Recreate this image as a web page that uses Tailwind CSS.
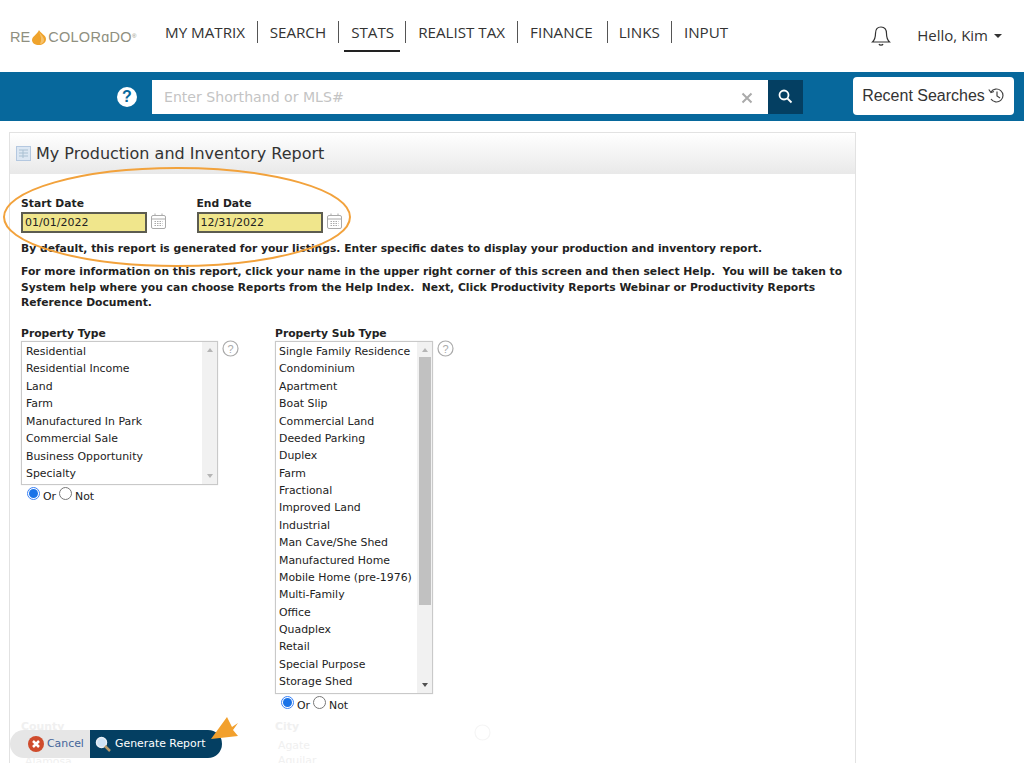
<!DOCTYPE html>
<html lang="en">
<head>
    <meta charset="UTF-8">
    <title>My Production and Inventory Report</title>
    <script src="https://cdn.jsdelivr.net/npm/@tailwindcss/browser@4"></script>
</head>
<body class="relative h-[763px] w-[1024px] overflow-hidden bg-white font-['DejaVu_Sans',sans-serif] text-[#222]">

    <!-- Top nav -->
    <header class="flex h-[72px] items-start">
        <div class="flex w-[165px] items-center pl-[10px] pt-[28px] font-['Liberation_Sans',sans-serif] text-[14.500px] leading-[18px] text-[#8f8f80]">
            <span>RE</span>
            <svg width="16" height="17" viewBox="0 0 16 17" class="mx-[1px]"><path d="M8 1 C9 4 15 6 15 10 C15 14 11 16 8 16 C4 16 1 14 1 11 C1 7 6 6 8 1Z" fill="#efa32c"/><path d="M8 3 C10 6 13 8 13 11 C13 13 11 15 9 15 C11 11 10 7 8 3Z" fill="#f6c26b"/></svg>
            <span class="tracking-[0.300px]">COLORɑDO</span><span class="mt-[5px] self-start text-[6px] leading-[6px]">®</span>
        </div>
        <nav class="flex pt-[21px] font-['Open_Sans',sans-serif] text-[15.200px] leading-[22px] text-[#333]">
            <a class="h-[22px] border-r border-[#555] pr-[12px]">MY MATRIX</a>
            <a class="h-[22px] border-r border-[#555] pl-[11.500px] pr-[12px]">SEARCH</a>
            <a class="relative h-[22px] border-r border-[#555] pl-[12px] pr-[11px]">STATS<span class="absolute left-[5px] right-[5px] top-[29px] h-[2px] bg-[#222]"></span></a>
            <a class="h-[22px] border-r border-[#555] px-[12px]">REALIST TAX</a>
            <a class="h-[22px] border-r border-[#555] pl-[12px] pr-[14px]">FINANCE</a>
            <a class="h-[22px] border-r border-[#555] px-[11px]">LINKS</a>
            <a class="h-[22px] pl-[12px]">INPUT</a>
        </nav>
        <div class="ml-auto flex items-center pt-[22px] pr-[22px] font-['Open_Sans',sans-serif] text-[15px] leading-[22px] text-[#333]">
            <svg width="20" height="22" viewBox="0 0 20 22" fill="none" stroke="#333" stroke-width="1.200" class="mr-[26px] mt-[3px]"><path d="M10 2 C6 2 4.500 5 4.500 8.500 C4.500 13 3.500 15 1.500 17 H18.500 C16.500 15 15.500 13 15.500 8.500 C15.500 5 14 2 10 2Z"/><path d="M8 19 C8.500 20.500 11.500 20.500 12 19"/></svg>
            <span>Hello, Kim</span>
            <span class="ml-[6px] mt-[2px] h-0 w-0 border-x-[4px] border-t-[4px] border-x-transparent border-t-[#333]"></span>
        </div>
    </header>

    <!-- Search bar -->
    <div class="flex h-[49px] items-center bg-[#07689c]">
        <div class="ml-[117px] flex h-[20px] w-[20px] items-center justify-center rounded-full bg-white font-['Liberation_Sans',sans-serif] text-[16px] font-bold text-[#07689c]">?</div>
        <div class="ml-[15px] flex h-[34px] w-[616px] items-center bg-white pl-[12px] pr-[15px] pt-[2px] text-[14.100px] text-[#c4c4c4]">
            <span>Enter Shorthand or MLS#</span>
            <svg width="12" height="12" viewBox="0 0 12 12" class="ml-auto" stroke="#aaa" stroke-width="2"><path d="M1.500 1.500 L10.500 10.500 M10.500 1.500 L1.500 10.500"/></svg>
        </div>
        <div class="flex h-[34px] w-[35px] items-center justify-center bg-[#043f62]">
            <svg width="15" height="15" viewBox="0 0 15 15" fill="none" stroke="#fff" stroke-width="1.800"><circle cx="6" cy="6" r="4.500"/><path d="M9.500 9.500 L13.500 13.500"/></svg>
        </div>
        <div class="mb-[1px] ml-[50px] flex h-[38px] w-[161px] items-center justify-center rounded-[4px] bg-white font-['Liberation_Sans',sans-serif] text-[16px] text-[#333]">
            <span>Recent Searches</span>
            <svg width="17" height="17" viewBox="0 0 17 17" fill="none" stroke="#444" stroke-width="1.200" class="mb-[2px] ml-[3px]"><path d="M3 5 A6.500 6.500 0 1 1 3 12"/><path d="M0.800 2.500 L3 5.500 L6 4.500"/><path d="M9 4.500 V9 L12 11"/></svg>
        </div>
    </div>

    <!-- Report panel -->
    <main class="ml-[9px] mt-[11px] h-[631px] w-[847px] overflow-hidden border border-b-0 border-[#e2e2e2]">
        <div class="flex h-[41px] items-center bg-gradient-to-b from-white to-[#e9e9e9] pl-[6px] text-[16px] text-[#333]">
            <svg width="15" height="15" viewBox="0 0 15 15" class="mr-[5px]"><rect x="0.500" y="0.500" width="14" height="14" fill="#dce7f3" stroke="#b4c8e0"/><path d="M3 4 H12 M3 7 H12 M3 10 H12 M7 4 V12" stroke="#a9c0d2"/></svg>
            <h1>My Production and Inventory Report</h1>
        </div>

        <div class="px-[11px] pt-[22px] text-[10.900px] leading-[15.500px] text-[#222]">
            <div class="flex">
                <div class="w-[175.500px]">
                    <label class="block text-[10.750px] font-bold leading-[16px]">Start Date</label>
                    <div class="flex items-center">
                        <div class="flex h-[21px] w-[126px] items-center border-2 border-[#5c5c50] bg-[#f0e68c] pl-[2px] text-[11px]">01/01/2022</div>
                        <svg width="15" height="16" viewBox="0 0 15 16" fill="none" stroke="#aaa" class="ml-[4px] mt-[-3px]"><rect x="0.500" y="2.500" width="14" height="13" rx="1.500"/><path d="M0.500 6 H14.500 M4 0.500 V3 M11 0.500 V3"/><path d="M3.500 8.500 H11.500 M3.500 10.500 H11.500 M3.500 12.500 H11.500" stroke-dasharray="1.500 1"/></svg>
                    </div>
                </div>
                <div>
                    <label class="block text-[10.750px] font-bold leading-[16px]">End Date</label>
                    <div class="flex items-center">
                        <div class="flex h-[21px] w-[126px] items-center border-2 border-[#5c5c50] bg-[#f0e68c] pl-[2px] text-[11px]">12/31/2022</div>
                        <svg width="15" height="16" viewBox="0 0 15 16" fill="none" stroke="#aaa" class="ml-[4px] mt-[-3px]"><rect x="0.500" y="2.500" width="14" height="13" rx="1.500"/><path d="M0.500 6 H14.500 M4 0.500 V3 M11 0.500 V3"/><path d="M3.500 8.500 H11.500 M3.500 10.500 H11.500 M3.500 12.500 H11.500" stroke-dasharray="1.500 1"/></svg>
                    </div>
                </div>
            </div>

            <p class="mt-[8px] text-[10.750px] font-bold">By default, this report is generated for your listings. Enter specific dates to display your production and inventory report.</p>
            <p class="mt-[7.500px] w-[830px] text-[10.750px] font-bold">For more information on this report, click your name in the upper right corner of this screen and then select Help.&nbsp; You will be taken to System help where you can choose Reports from the Help Index.&nbsp; Next, Click Productivity Reports Webinar or Productivity Reports Reference Document.</p>

            <div class="mt-[15px] flex">
                <!-- Property Type -->
                <div class="w-[254px]">
                    <label class="block text-[10.750px] font-bold leading-[15px]">Property Type</label>
                    <div class="flex">
                        <div class="flex h-[144px] w-[197px] border border-[#c9c9c9] shadow-[0_0_1px_#ddd]">
                            <ul class="flex-1 pl-[4px] pt-[1.500px] leading-[17.430px]">
                                <li>Residential</li><li>Residential Income</li><li>Land</li><li>Farm</li><li>Manufactured In Park</li><li>Commercial Sale</li><li>Business Opportunity</li><li>Specialty</li>
                            </ul>
                            <div class="flex w-[15px] flex-col items-center justify-between bg-[#f1f1f1] py-[6px]">
                                <span class="h-0 w-0 border-x-[3px] border-b-[4px] border-x-transparent border-b-[#b5b5b5]"></span>
                                <span class="h-0 w-0 border-x-[3px] border-t-[4px] border-x-transparent border-t-[#b5b5b5]"></span>
                            </div>
                        </div>
                        <svg width="17" height="17" viewBox="0 0 17 17" class="ml-[4px] mt-[-1px]"><circle cx="8.500" cy="8.500" r="7.500" fill="none" stroke="#aaa" stroke-width="1.200"/><text x="8.500" y="12.500" text-anchor="middle" font-size="11" fill="#aaa" font-family="Liberation Sans">?</text></svg>
                    </div>
                    <div class="ml-[6px] mt-[1px] flex items-start">
                        <span class="mr-[3px] mt-[1px] flex h-[13px] w-[13px] items-center justify-center rounded-full border border-[#3b82f6] bg-white"><span class="h-[9px] w-[9px] rounded-full bg-[#1a73e8]"></span></span><span class="mt-[3px]">Or</span>
                        <span class="ml-[3px] mr-[3px] mt-[1px] h-[13px] w-[13px] rounded-full border border-[#777] bg-white"></span><span class="mt-[3px]">Not</span>
                    </div>
                </div>
                <!-- Property Sub Type -->
                <div>
                    <label class="block text-[10.750px] font-bold leading-[15px]">Property Sub Type</label>
                    <div class="flex">
                        <div class="flex h-[353px] w-[158px] border border-[#c9c9c9] shadow-[0_0_1px_#ddd]">
                            <ul class="flex-1 whitespace-nowrap pl-[3px] pt-[1.500px] leading-[17.370px]">
                                <li>Single Family Residence</li><li>Condominium</li><li>Apartment</li><li>Boat Slip</li><li>Commercial Land</li><li>Deeded Parking</li><li>Duplex</li><li>Farm</li><li>Fractional</li><li>Improved Land</li><li>Industrial</li><li>Man Cave/She Shed</li><li>Manufactured Home</li><li>Mobile Home (pre-1976)</li><li>Multi-Family</li><li>Office</li><li>Quadplex</li><li>Retail</li><li>Special Purpose</li><li>Storage Shed</li>
                            </ul>
                            <div class="flex w-[15px] flex-col items-center bg-[#f1f1f1]">
                                <span class="mt-[6px] h-0 w-0 border-x-[3px] border-b-[4px] border-x-transparent border-b-[#b5b5b5]"></span>
                                <span class="mt-[5px] h-[248px] w-[12px] bg-[#c1c1c1]"></span>
                                <span class="mb-[6px] mt-auto h-0 w-0 border-x-[3px] border-t-[4px] border-x-transparent border-t-[#505050]"></span>
                            </div>
                        </div>
                        <svg width="17" height="17" viewBox="0 0 17 17" class="ml-[4px] mt-[-1px]"><circle cx="8.500" cy="8.500" r="7.500" fill="none" stroke="#aaa" stroke-width="1.200"/><text x="8.500" y="12.500" text-anchor="middle" font-size="11" fill="#aaa" font-family="Liberation Sans">?</text></svg>
                    </div>
                    <div class="ml-[6px] mt-[1px] flex items-start">
                        <span class="mr-[3px] mt-[1px] flex h-[13px] w-[13px] items-center justify-center rounded-full border border-[#3b82f6] bg-white"><span class="h-[9px] w-[9px] rounded-full bg-[#1a73e8]"></span></span><span class="mt-[3px]">Or</span>
                        <span class="ml-[3px] mr-[3px] mt-[1px] h-[13px] w-[13px] rounded-full border border-[#777] bg-white"></span><span class="mt-[3px]">Not</span>
                    </div>
                </div>
            </div>

            <!-- Next row, mostly faded behind the action bar -->
            <div class="mt-[6px] flex text-[#f0f0f0]">
                <div class="w-[254px]">
                    <div class="font-bold">County</div>
                    <div class="mt-[19px] pl-[4px]">Alamosa</div>
                </div>
                <div class="flex">
                    <div class="w-[199px]">
                        <div class="font-bold">City</div>
                        <div class="mt-[3px] pl-[3px] leading-[15.500px]">Agate<br>Aguilar</div>
                    </div>
                    <svg width="17" height="17" viewBox="0 0 17 17" class="mt-[5px]"><circle cx="8.500" cy="8.500" r="7.500" fill="none" stroke="#f5f5f5" stroke-width="1.200"/></svg>
                </div>
            </div>
        </div>
    </main>

    <!-- Action bar -->
    <div class="absolute left-[10px] top-[730px] flex h-[28px] w-[212px] overflow-hidden rounded-[14px] text-[10.900px]">
        <div class="flex w-[80px] items-center bg-[#e6e6e6] pl-[18px] text-[#44659a]">
            <svg width="16" height="16" viewBox="0 0 16 16" class="mr-[3px] shrink-0"><circle cx="8" cy="8" r="8" fill="#cf4b2c"/><path d="M5 5 L11 11 M11 5 L5 11" stroke="#fff" stroke-width="2.500"/></svg>
            <span>Cancel</span>
        </div>
        <div class="flex flex-1 items-center bg-[#043f62] pl-[5px] text-white">
            <svg width="16" height="16" viewBox="0 0 16 16" class="mr-[4px] shrink-0"><circle cx="6.500" cy="6.500" r="5" fill="#cfe3f5" stroke="#e8eef5" stroke-width="1.500"/><path d="M10 10 L15 15" stroke="#b79a6a" stroke-width="2.500"/></svg>
            <span>Generate Report</span>
        </div>
    </div>

    <!-- Orange callouts -->
    <svg class="pointer-events-none absolute left-0 top-0" width="1024" height="763" fill="none">
        <ellipse cx="177" cy="217" rx="173" ry="49" stroke="#f2a23c" stroke-width="2"/>
        <path d="M211 739 L227 717 L232 727 L238 723 L233 730 L238 736 Z" fill="#f2a02d"/>
    </svg>
</body>
</html>
